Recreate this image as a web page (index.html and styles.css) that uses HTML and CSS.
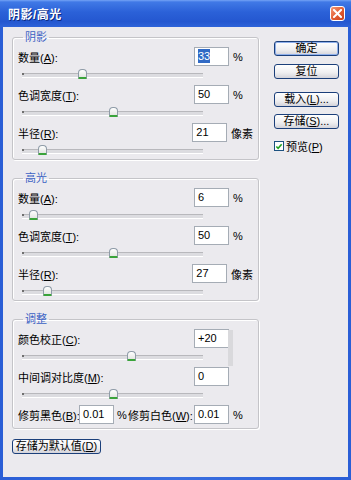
FILE: index.html
```html
<!DOCTYPE html>
<html lang="zh-CN">
<head>
  <meta charset="UTF-8" />
  <title>阴影/高光</title>
  <link rel="stylesheet" href="styles.css">
</head>
<body>
  <div class="window">
    <div class="titlebar">
      <span class="title">阴影/高光</span>
      <span class="close">
        <svg width="9" height="9" viewBox="0 0 9 9"><path d="M1 1 L8 8 M8 1 L1 8" stroke="#fff" stroke-width="2" stroke-linecap="square"/></svg>
      </span>
    </div>

    <div class="client">
      <div class="main">
        <fieldset class="group">
          <legend>阴影</legend>
          <div class="item">
            <div class="row"><span class="label">数量(<u>A</u>):</span><span class="field"><span class="hl">33</span></span><span class="unit">%</span></div>
            <div class="slider"><span class="thumb" style="left:33%"></span></div>
          </div>
          <div class="item">
            <div class="row"><span class="label">色调宽度(<u>T</u>):</span><span class="field">50</span><span class="unit">%</span></div>
            <div class="slider"><span class="thumb" style="left:50%"></span></div>
          </div>
          <div class="item">
            <div class="row"><span class="label">半径(<u>R</u>):</span><span class="field">21</span><span class="unit">像素</span></div>
            <div class="slider"><span class="thumb" style="left:11%"></span></div>
          </div>
        </fieldset>

        <fieldset class="group">
          <legend>高光</legend>
          <div class="item">
            <div class="row"><span class="label">数量(<u>A</u>):</span><span class="field">6</span><span class="unit">%</span></div>
            <div class="slider"><span class="thumb" style="left:6%"></span></div>
          </div>
          <div class="item">
            <div class="row"><span class="label">色调宽度(<u>T</u>):</span><span class="field">50</span><span class="unit">%</span></div>
            <div class="slider"><span class="thumb" style="left:50%"></span></div>
          </div>
          <div class="item">
            <div class="row"><span class="label">半径(<u>R</u>):</span><span class="field">27</span><span class="unit">像素</span></div>
            <div class="slider"><span class="thumb" style="left:14%"></span></div>
          </div>
        </fieldset>

        <fieldset class="group last">
          <legend>调整</legend>
          <div class="item">
            <div class="row"><span class="label">颜色校正(<u>C</u>):</span><span class="field spin">+20</span></div>
            <div class="slider"><span class="thumb" style="left:60%"></span></div>
          </div>
          <div class="item">
            <div class="row"><span class="label">中间调对比度(<u>M</u>):</span><span class="field">0</span></div>
            <div class="slider"><span class="thumb" style="left:50%"></span></div>
          </div>
          <div class="row clip">
            <span class="label-b">修剪黑色(<u>B</u>):</span><span class="field">0.01</span><span class="pct">%</span>
            <span class="label-w">修剪白色(<u>W</u>):</span><span class="field">0.01</span><span class="unit">%</span>
          </div>
        </fieldset>

        <button class="btn save-default">存储为默认值(<u>D</u>)</button>
      </div>

      <div class="side">
        <button class="btn default">确定</button>
        <button class="btn">复位</button>
        <button class="btn gap">载入(<u>L</u>)...</button>
        <button class="btn">存储(<u>S</u>)...</button>
        <div class="check">
          <span class="box">
            <svg width="9" height="9" viewBox="0 0 9 9"><path d="M1.5 4.5 L3.5 6.5 L7.5 2" fill="none" stroke="#21a121" stroke-width="1.8"/></svg>
          </span>
          <span>预览(<u>P</u>)</span>
        </div>
      </div>
    </div>
  </div>
</body>
</html>
```

FILE: styles.css
```css
* { box-sizing: border-box; }
body {
  margin: 0;
  font-family: 'Liberation Sans', 'Noto Sans CJK SC', sans-serif;
  font-size: 11px;
  color: #000;
  background: #fff;
}
u { text-decoration: underline; text-underline-offset: 1px; }

/* window frame */
.window {
  width: 351px; height: 480px;
  background: linear-gradient(90deg, #2a5ed6, #3a6fe0 50%, #2a5ed6);
  display: flex; flex-direction: column;
  padding: 0 3px 3px 3px;
}
.titlebar {
  height: 27px;
  margin: 0 -3px;
  padding: 0 6px 0 8px;
  display: flex; align-items: center; justify-content: space-between;
  background: linear-gradient(#74a3f5 0, #4079e6 2px, #2b61d8 45%, #2457d0 80%, #2e63d9 100%);
}
.title {
  color: #fff; font-weight: 700; font-size: 12px;
  text-shadow: 1px 1px 0 #0c2a80;
  letter-spacing: 0.5px;
}
.close {
  width: 15px; height: 15px;
  border: 1px solid #fff; border-radius: 3px;
  background: linear-gradient(135deg, #f39878, #e25a2f 55%, #c8401f);
  display: flex; align-items: center; justify-content: center;
}
.close svg { display: block; }

.client {
  flex: 1;
  background: #ebeaee;
  display: flex;
  padding: 3px 0 0 9px;
}
.main { width: 247px; display: flex; flex-direction: column; }
.side {
  width: 65px; margin-left: 15px; padding-top: 11px;
  display: flex; flex-direction: column;
}

/* group boxes */
.group {
  margin: 0 0 11px 0;
  padding: 0 5px 0 5px;
  border: 1px solid #c4c4c8;
  border-radius: 3px;
  box-shadow: inset 1px 1px 0 #fff, 1px 1px 0 #fff;
  min-width: 0;
}
.group legend {
  margin-left: 5px;
  padding: 0 2px;
  height: 14px; line-height: 14px;
  color: #3c62c4;
}
.group.last { padding-bottom: 4px; margin-bottom: 10px; }
.item { margin-top: 3px; }
.group .row.clip { margin-top: 3px; }
.group .item:last-of-type .slider { height: 17px; }

.row {
  display: flex; align-items: center;
  height: 19px;
  white-space: nowrap;
}
.label { width: 176px; }
.field {
  width: 35px; height: 19px;
  background: #fff;
  border: 1px solid #a5acb5;
  padding: 0 3px;
  line-height: 17px;
  font-size: 11px;
  position: relative;
}
.hl { background: #316ac5; color: #fff; padding: 1px 0; }
.unit { margin-left: 4px; }
.spin::after {
  content: '';
  position: absolute; left: 33px; top: 0;
  width: 5px; height: 36px;
  background: #d9d9dc;
}
.label-b { width: 61px; }
.pct { width: 11px; margin-left: 3px; }
.label-w { width: 66px; }

/* sliders */
.slider {
  position: relative;
  height: 16px;
  margin-left: 4px;
  width: 181px;
}
.slider::before {
  content: '';
  position: absolute; left: 0; right: 0; top: 7px;
  height: 3px;
  border-top: 1px solid #b8b8bc;
  border-bottom: 1px solid #fff;
  background: #dcdce0;
}
.slider::after {
  content: '';
  position: absolute; left: 0; top: 7px;
  width: 2px; height: 2px;
  background: #707070;
}
.thumb {
  position: absolute; top: 3px;
  margin-left: -4px;
  width: 9px; height: 10px;
  border: 1px solid #8f9ca8;
  border-bottom: 2px solid #3aa43a;
  border-radius: 4px 4px 1px 1px;
  background: linear-gradient(#ffffff, #e4e6e2);
  z-index: 1;
}

/* buttons */
.btn {
  font-family: inherit;
  font-size: 11px;
  height: 15px;
  padding: 0;
  border: 1px solid #1b3f7a;
  border-radius: 3px;
  background: linear-gradient(#ffffff, #eeeef0 60%, #d3d3da);
  color: #000;
  line-height: 13px;
  margin-bottom: 8px;
}
.btn.default { box-shadow: inset 0 0 0 1px #8fb0ec; }
.btn.gap { margin-top: 5px; margin-bottom: 7px; }
.save-default { width: 89px; margin-left: 0; }

.check {
  display: flex; align-items: center; gap: 2px;
  margin-top: 1px;
  font-size: 11px;
}
.box {
  width: 10px; height: 10px;
  border: 1px solid #1c5180;
  background: #fff;
  display: flex; align-items: center; justify-content: center;
}
.box svg { display: block; }
```
